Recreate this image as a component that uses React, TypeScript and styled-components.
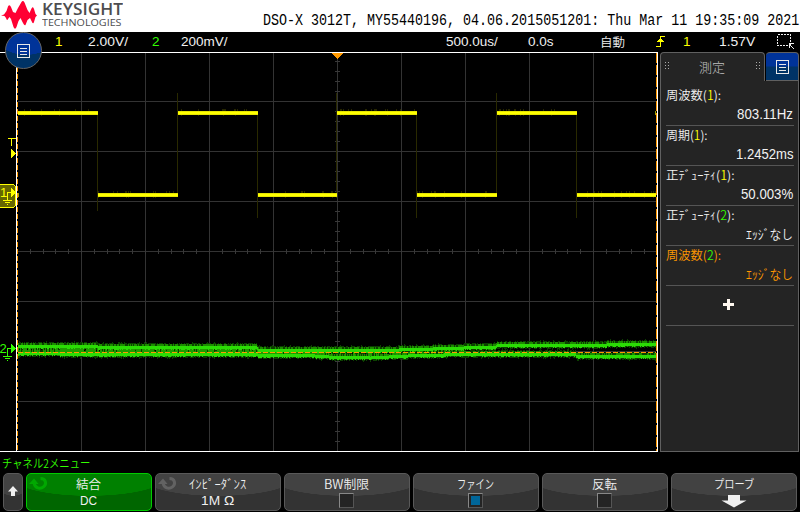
import React, { useLayoutEffect, useRef, useState } from "react";
import styled, { createGlobalStyle } from "styled-components";

const Global = createGlobalStyle`
  * { box-sizing: border-box; }
  html, body { margin: 0; background: #000; overflow: hidden; }
`;

const SANS = '"Liberation Sans", "Noto Sans CJK JP", sans-serif';
const JP = '"Noto Sans CJK JP", sans-serif';
const YELLOW = "#ffff00";
const GREEN = "#33ff00";
const ORANGE = "#ff9900";

/* ---------- text that fills a fixed cell width ---------- */

const Cell = styled.span<{ $w: number; $h: number; $ml?: number; $color?: string }>`
  display: block;
  flex: none;
  width: ${(p) => p.$w}px;
  height: ${(p) => p.$h}px;
  margin-left: ${(p) => p.$ml ?? 0}px;
  line-height: ${(p) => p.$h}px;
  color: ${(p) => p.$color ?? "inherit"};
`;

const Glyphs = styled.span<{ $size: number; $font: string; $weight: number }>`
  display: inline-block;
  vertical-align: top;
  white-space: pre;
  transform-origin: 0 50%;
  font-family: ${(p) => p.$font};
  font-size: ${(p) => p.$size}px;
  font-weight: ${(p) => p.$weight};
  line-height: inherit;
`;

type LabelProps = {
  w: number;
  h?: number;
  ml?: number;
  size?: number;
  color?: string;
  font?: string;
  weight?: number;
  children: React.ReactNode;
};

function Label({ w, h = 16, ml, size = 13.5, color, font = SANS, weight = 400, children }: LabelProps) {
  const ref = useRef<HTMLSpanElement>(null);
  const [scale, setScale] = useState(1);
  useLayoutEffect(() => {
    if (ref.current) setScale(w / ref.current.offsetWidth);
  }, [w]);
  return (
    <Cell $w={w} $h={h} $ml={ml} $color={color}>
      <Glyphs ref={ref} $size={size} $font={font} $weight={weight} style={{ transform: `scaleX(${scale})` }}>
        {children}
      </Glyphs>
    </Cell>
  );
}

/* ---------- frame ---------- */

const Screen = styled.div`
  position: relative;
  display: flex;
  flex-direction: column;
  width: 800px;
  height: 512px;
  overflow: hidden;
  background: #000;
  color: #f0f0f0;
`;

const Header = styled.header`
  display: flex;
  flex: none;
  height: 32px;
  background: #fff;
  color: #000;
`;

const Mark = styled.svg`
  flex: none;
  width: 38px;
  height: 32px;
`;

const BrandText = styled.div`
  display: flex;
  flex-direction: column;
  flex: none;
  width: 225px;
  padding: 0 0 0 4px;
  color: #4d4d4f;
`;

const Identity = styled.div`
  padding-top: 13px;
`;

const StatusBar = styled.div`
  display: flex;
  flex: none;
  height: 20px;
  padding-top: 2px;
`;

const StatusIcon = styled.svg<{ $ml: number }>`
  flex: none;
  width: 20px;
  height: 18px;
  margin-left: ${(p) => p.$ml}px;
`;

const MainMenu = styled.div`
  position: absolute;
  left: 5px;
  top: 32px;
  width: 37px;
  height: 37px;
  display: flex;
  align-items: center;
  justify-content: center;
  border: 1px solid #666;
  border-radius: 50%;
  background: radial-gradient(ellipse 28px 17px at 20px 5px, #003399 98%, #003366 100%);
`;

const Body = styled.main`
  display: flex;
  flex: none;
  height: 400px;
`;

const Plot = styled.svg`
  flex: none;
  width: 658px;
  height: 400px;
  font-family: ${SANS};
`;

/* ---------- measurement panel ---------- */

const Panel = styled.aside`
  display: flex;
  flex-direction: column;
  width: 139px;
  height: 400px;
  margin-left: 2px;
`;

const TabRow = styled.div`
  display: flex;
  flex: none;
  height: 29px;
`;

const Tab = styled.div`
  display: flex;
  justify-content: space-between;
  width: 105px;
  padding: 5px 4px 0 3px;
  border: 1px solid #606060;
  border-bottom: 0;
  border-radius: 4px 4px 0 0;
  background: #242424;
  color: #c0c0c0;
`;

const Grip = styled.svg`
  flex: none;
  width: 5px;
  height: 18px;
`;

const PanelButton = styled.div`
  display: flex;
  align-items: center;
  justify-content: center;
  width: 33px;
  height: 29px;
  margin-left: 1px;
  border: 1px solid #606060;
  border-width: 1px 1px 1px 0;
  border-radius: 4px 4px 0 0;
  background: linear-gradient(#003399 48%, #003366 52%);
`;

const PanelBody = styled.div`
  flex: 1;
  padding: 5px 4px 0 5px;
  border: solid #606060;
  border-width: 0 1px 1px;
  background: #242424;
`;

const Reading = styled.section<{ $accent?: boolean }>`
  display: flex;
  flex-direction: column;
  height: 40px;
  border-bottom: 1px solid #555;
  color: ${(p) => (p.$accent ? ORANGE : "#f2f2f2")};
`;

const ReadingValue = styled.div`
  display: flex;
  justify-content: flex-end;
  padding: 4px 1px 0 0;
`;

const ReadingName = styled.div`
  display: flex;
  height: 16px;
`;

const AddRow = styled.div`
  display: flex;
  height: 40px;
  align-items: center;
  justify-content: center;
  padding: 0 3px 3px 0;
  border-bottom: 1px solid #555;
`;

/* ---------- soft keys ---------- */

const MenuTitle = styled.div`
  flex: none;
  height: 21px;
  padding: 3px 0 0 2px;
`;

const SoftKeys = styled.nav`
  display: flex;
  flex: none;
  gap: 3px;
  padding-left: 3px;
`;

const Key = styled.div<{ $active?: boolean; $w?: number }>`
  position: relative;
  display: flex;
  flex-direction: column;
  align-items: center;
  width: ${(p) => p.$w ?? 126}px;
  height: 38px;
  padding: 2px 1px 0 0;
  border: 1px solid ${(p) => (p.$active ? "#00cc00" : "#595959")};
  border-radius: 5px;
  background: ${(p) =>
    p.$active
      ? "radial-gradient(ellipse 76px 18px at 50% 4px, #008000 98%, #006600 100%)"
      : "radial-gradient(ellipse 76px 18px at 50% 4px, #424242 98%, #333333 100%)"};
`;

const BackKey = styled(Key)`
  padding: 11px 0 0;
  background: radial-gradient(ellipse 18px 18px at 50% 4px, #424242 98%, #333333 100%);
`;

const Knob = styled.svg`
  position: absolute;
  left: 2px;
  top: 0;
  width: 20px;
  height: 18px;
`;

const Check = styled.span<{ $on?: boolean }>`
  width: 15px;
  height: 15px;
  margin-top: 1px;
  border: 1px solid;
  border-color: #888 #555 #555 #888;
  background: ${(p) => (p.$on ? "#006699" : "#242424")};
  box-shadow: inset 0 0 0 2px #242424;
`;

const ListIcon = ({ size }: { size: number }) => (
  <svg width={size} height={size + 1} viewBox="0 0 13 14" fill="none" stroke="#e8e8e8" shapeRendering="crispEdges">
    <rect x="0.5" y="0.5" width="12" height="13" />
    <path d="M3 4.5h7M3 7.5h7M3 10.5h7" />
  </svg>
);

function KnobIcon({ color }: { color: string }) {
  return (
    <Knob viewBox="0 0 20 18">
      <path d="M11.500 4.500C17 4.500 18 10 14.500 12.800C11 15.500 6 14 5.200 9.500" fill="none" stroke={color} strokeWidth="3" />
      <path d="M0 10L5 4.500L9.500 10Z" fill={color} />
    </Knob>
  );
}

/* ---------- waveforms ---------- */

function rng(seed: number) {
  let s = seed;
  return () => {
    s = (s * 1664525 + 1013904223) >>> 0;
    return s / 4294967296;
  };
}

function follow(points: number[][], x: number) {
  for (let i = 1; i < points.length; i++) {
    const [x0, y0] = points[i - 1];
    const [x1, y1] = points[i];
    if (x <= x1) return y0 + ((y1 - y0) * (x - x0)) / (x1 - x0);
  }
  return points[points.length - 1][1];
}

const UPPER = [[18, 345.5], [98, 346.5], [178, 347], [257, 347.5], [258, 349.5], [380, 350], [417, 349], [495, 346.5], [497, 345], [576, 344.8], [656, 344]];
const LOWER = [[18, 352.5], [60, 353.5], [98, 354], [178, 354], [257, 354], [258, 355], [315, 355.5], [335, 357], [370, 357.5], [417, 355], [497, 353.5], [575, 353.5], [576, 355.5], [656, 355.5]];

function band(points: number[][], seed: number) {
  const r = rng(seed);
  let glow = "";
  let mid = "";
  let core = "";
  for (let x = 18; x < 656; x++) {
    const y = Math.round(follow(points, x));
    const up = r() < 0.06 ? 5 : r() < 0.6 ? 4 : 3;
    const dn = r() < 0.05 ? 5 : r() < 0.5 ? 4 : 3;
    glow += `M${x} ${y - up}h1v${up + dn}h-1z`;
    if (r() < 0.6) mid += `M${x} ${y - 3}h1v${r() < 0.5 ? 6 : 5}h-1z`;
    core += `M${x} ${y - 1}h1v${r() < 0.3 ? 4 : 3}h-1z`;
  }
  return { glow, mid, core };
}

/* persistence haze between the two bands on the left two thirds of the sweep */
function haze() {
  const r = rng(5);
  let d = "";
  for (let x = 18; x < 450; x++) {
    const top = Math.round(follow(UPPER, x)) + 1;
    const bottom = Math.round(follow(LOWER, x));
    const density = x < 60 ? 0.5 : x < 310 ? 0.8 : 0.35;
    if (r() < density) d += `M${x} ${top}h1V${bottom}h-1z`;
  }
  return d;
}

const BANDS = [band(UPPER, 7), band(LOWER, 31)];
const HAZE = haze();
const EDGES = [98, 178, 258, 337, 417, 497, 577];
const HIGH = [[18, 98], [178, 258], [337, 417], [497, 577]];
const LOW = [[98, 178], [258, 337], [417, 497], [577, 656]];

function Waveforms() {
  const grid: string[] = [];
  for (let x = 81; x < 640; x += 64) grid.push(`M${x} 53h1v398h-1z`);
  for (let y = 101; y < 440; y += 50) grid.push(`M18 ${y}h638v1h-638z`);
  const ticks: string[] = [];
  for (let y = 61; y < 451; y += 10) ticks.push(`M335 ${y}h5v1h-5z`);
  for (let i = 1; i < 50; i++) ticks.push(`M${Math.round(17 + i * 12.8)} 249h1v5h-1z`);
  const fuzz: string[] = [];
  const r = rng(99);
  for (const [segments, y] of [[HIGH, 113], [LOW, 195]] as [number[][], number][])
    for (const [a, b] of segments)
      for (let x = a; x < b; x++) if (r() < 0.15) fuzz.push(`M${x} ${y - 4}h1v${r() < 0.5 ? 7 : 5}h-1z`);
  return (
    <Plot viewBox="0 52 658 400" shapeRendering="crispEdges">
      <path d={grid.join("")} fill="#333" />
      <path d={ticks.join("")} fill="#383838" />
      {EDGES.map((x, i) => (
        <path key={x} d={i % 2 ? `M${x - 1} 93h1v103h-1z` : `M${x - 1} 112h1v${i === 0 ? 99 : 106}h-1z`} fill="#292900" />
      ))}
      <path d={fuzz.join("")} fill="#262600" />
      {HIGH.map(([a, b]) => (
        <g key={a}>
          <rect x={a} y="111" width={b - a} height="4" fill="#e6e600" />
          <rect x={a} y="112" width={b - a} height="2" fill="#ffff00" />
        </g>
      ))}
      {LOW.map(([a, b]) => (
        <g key={a}>
          <rect x={a} y="193" width={b - a} height="4" fill="#e6e600" />
          <rect x={a} y="194" width={b - a} height="2" fill="#ffff00" />
        </g>
      ))}
      <path d="M18 193h1v4h-1zM655 111h1v4h-1z" fill="#a0a000" />
      {BANDS.map((b, i) => (
        <path key={i} d={b.glow} fill="#0b4000" />
      ))}
      {BANDS.map((b, i) => (
        <path key={i} d={b.mid} fill="#1c8c00" />
      ))}
      <path d={HAZE} fill="#1f9e00" />
      {BANDS.map((b, i) => (
        <path key={i} d={b.core} fill="#2bdc05" />
      ))}
      <path d="M18 352.5H656" stroke={ORANGE} strokeDasharray="5 2" />
      <path d="M17.5 53V451" stroke={ORANGE} strokeDasharray="5 2" />
      <path d="M656.5 53V451" stroke={ORANGE} strokeDasharray="10 2" />
      <path d="M0 52h658v1h-658zM0 451h658v1h-658zM16 52h1v400h-1zM657 52h1v400h-1z" fill="#fff" />
      <path d="M332 53h11l-5.5 6z" fill={ORANGE} />

      <path d="M8 138h8v1h-8zM11 139h1v7h-1z" fill={YELLOW} />
      <path d="M11 149l5 4.5l-5 4.5z" fill={YELLOW} />
      <path d="M0 184.500H13.500L15.500 186.500V205.500L13.500 207.500H0" fill="#666600" stroke={YELLOW} />
      <text x="0" y="197" fontSize="13" fill={YELLOW}>1</text>
      <path d="M7.500 200V192.500H12M3 200.500H12M5 202.500H10M7 204.500H8" fill="none" stroke={YELLOW} />
      <path d="M11 188l5 4.500l-5 4.500z" fill={YELLOW} />
      <text x="-0.5" y="353" fontSize="13" fill={GREEN}>2</text>
      <path d="M7.500 356V348.500H12M3 356.500H12M5 358.500H10M7 360.500H8" fill="none" stroke={GREEN} />
      <path d="M11 344l5 4.500l-5 4.500z" fill={GREEN} />
    </Plot>
  );
}

/* ---------- page ---------- */

const GripDots = () => (
  <Grip viewBox="0 0 5 18" fill="#aaa" shapeRendering="crispEdges">
    <path d="M1 4h1v1h-1zM4 4h1v1h-1zM1 7h1v1h-1zM4 7h1v1h-1zM1 10h1v1h-1zM4 10h1v1h-1z" />
  </Grip>
);

const READINGS = [
  { name: "周波数", ch: "1", w: 55, value: "803.11Hz", vw: 56 },
  { name: "周期", ch: "1", w: 42, value: "1.2452ms", vw: 57 },
  { name: "正ﾃﾞｭｰﾃｨ", ch: "1", w: 69, value: "50.003%", vw: 52 },
  { name: "正ﾃﾞｭｰﾃｨ", ch: "2", w: 69, value: "ｴｯｼﾞなし", vw: 47 },
  { name: "周波数", ch: "2", w: 55, value: "ｴｯｼﾞなし", vw: 47, accent: true },
];

const ChannelNumber = styled.span<{ $ch: string }>`
  color: ${(p) => (p.$ch === "1" ? YELLOW : GREEN)};
`;

export default function App() {
  return (
    <Screen>
      <Global />
      <Header>
        <Mark viewBox="0 0 38 32">
          <path
            fill="#ff0033"
            d="M1 15.500L4 14.500L6.500 11L8 6.500Q9.500 4 11 7L13 12L15.500 13L18 8L21.500 2Q23 0 24.500 2.500L27.500 10L29.500 13L31.500 8.500Q33 6 34 9L35.500 14L37 15.500L35.500 17L34 22Q33 25 31.500 21L30 18L27.500 20L25.500 25Q24.500 26 23 23L20.500 18L18.500 21L16.500 27Q15 30.500 13.500 27L11 19L9.500 17L8 19Q7 21.500 6 18L4.500 16Z"
          />
        </Mark>
        <BrandText>
          <Label w={81} h={18} size={16} font='"Open Sans", sans-serif' weight={600}>KEYSIGHT</Label>
          <Label w={79} h={10} size={9.5} font='"Open Sans", sans-serif' weight={400}>TECHNOLOGIES</Label>
        </BrandText>
        <Identity>
          <Label w={536} size={16} font='"Liberation Mono", monospace' weight={400}>
            DSO-X 3012T, MY55440196, 04.06.2015051201: Thu Mar 11 19:35:09 2021
          </Label>
        </Identity>
      </Header>

      <StatusBar>
        <Label ml={55} w={8} color={YELLOW}>1</Label>
        <Label ml={25} w={40}>2.00V/</Label>
        <Label ml={24} w={8} color={GREEN}>2</Label>
        <Label ml={21} w={47}>200mV/</Label>
        <Label ml={218} w={52}>500.0us/</Label>
        <Label ml={30} w={26}>0.0s</Label>
        <Label ml={46} w={25} size={12.5} font={JP} weight={350}>自動</Label>
        <StatusIcon $ml={30} viewBox="655 34 20 18" fill="none" stroke={YELLOW} shapeRendering="crispEdges">
          <path d="M656 46.500H660.500V36.500H665M660 36.500H665M656 46.500H661" strokeWidth="1.400" />
          <path d="M656.500 42L660.500 38L664.500 42Z" fill={YELLOW} stroke="none" />
        </StatusIcon>
        <Label ml={8} w={8} color={YELLOW}>1</Label>
        <Label ml={28} w={36}>1.57V</Label>
        <StatusIcon $ml={21} viewBox="776 34 20 18" fill="none" stroke="#f0f0f0" shapeRendering="crispEdges">
          <path d="M777.500 34.500H790.500V45.500H777.500Z" strokeDasharray="2 1" />
          <path d="M789 44l5 5M789 43.500h5M789.500 43v5" strokeWidth="1.300" />
        </StatusIcon>
      </StatusBar>

      <Body>
        <Waveforms />
        <Panel>
          <TabRow>
            <Tab>
              <GripDots />
              <Label w={26} h={17} size={13} font={JP} weight={300}>測定</Label>
              <GripDots />
            </Tab>
            <PanelButton>
              <ListIcon size={13} />
            </PanelButton>
          </TabRow>
          <PanelBody>
            {READINGS.map((m, i) => (
              <Reading key={i} $accent={m.accent}>
                <ReadingName>
                  <Label w={m.w} h={17} size={12.5} font={JP} weight={350}>
                    {m.name}(<ChannelNumber $ch={m.ch}>{m.ch}</ChannelNumber>):
                  </Label>
                </ReadingName>
                <ReadingValue>
                  <Label w={m.vw} h={i > 2 ? 16 : 17} size={i > 2 ? 13 : 14} font={i > 2 ? JP : SANS} weight={i > 2 ? 350 : 400}>
                    {m.value}
                  </Label>
                </ReadingValue>
              </Reading>
            ))}
            <AddRow>
              <svg width="11" height="11" viewBox="0 0 11 11" shapeRendering="crispEdges">
                <path d="M4 0h3v4h4v3h-4v4h-3v-4h-4v-3h4z" fill="#fff8f0" />
              </svg>
            </AddRow>
          </PanelBody>
        </Panel>
      </Body>

      <MenuTitle>
        <Label w={88} size={12} font={JP} color={GREEN} weight={350}>チャネル2メニュー</Label>
      </MenuTitle>

      <SoftKeys>
        <BackKey $w={20}>
          <svg width="12" height="12" viewBox="0 0 12 12">
            <path d="M6 1L11 6.500H8V11H4V6.500H1Z" fill="#f0f0f0" />
          </svg>
        </BackKey>
        <Key $active>
          <KnobIcon color="#00a800" />
          <Label w={25} size={12.5} font={JP} weight={350}>結合</Label>
          <Label w={17} h={18} size={12.5}>DC</Label>
        </Key>
        <Key>
          <KnobIcon color="#626262" />
          <Label w={57} size={12.5} font={JP} weight={350}>ｲﾝﾋﾟｰﾀﾞﾝｽ</Label>
          <Label w={33} h={18} size={12.5}>1M Ω</Label>
        </Key>
        <Key>
          <Label w={45} size={12.5} font={JP} weight={350}>BW制限</Label>
          <Check />
        </Key>
        <Key>
          <Label w={37} size={12.5} font={JP} weight={350}>ファイン</Label>
          <Check $on />
        </Key>
        <Key>
          <Label w={25} size={12.5} font={JP} weight={350}>反転</Label>
          <Check />
        </Key>
        <Key>
          <Label w={40} size={12.5} font={JP} weight={350}>プローブ</Label>
          <svg width="26" height="16" viewBox="0 0 26 16">
            <path d="M7 3H19V8.500H25.500L13 15.500L0.500 8.500H7Z" fill="#f0f0f0" />
          </svg>
        </Key>
      </SoftKeys>

      <MainMenu>
        <ListIcon size={13} />
      </MainMenu>
    </Screen>
  );
}
